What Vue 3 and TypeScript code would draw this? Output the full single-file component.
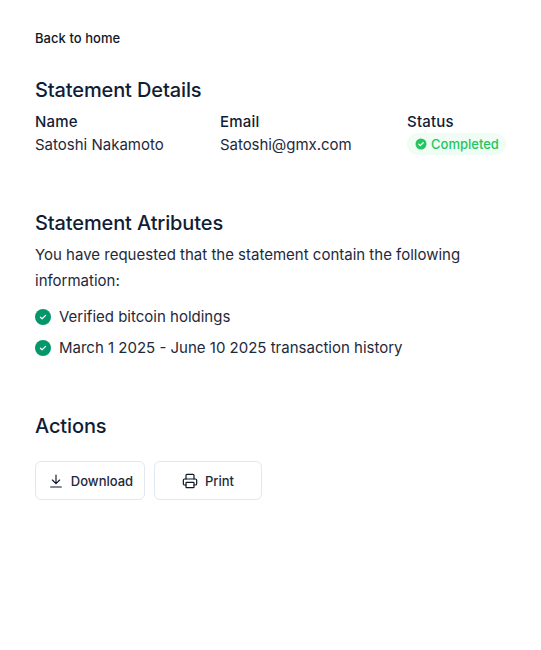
<template>
  <main class="page">
    <a class="back" href="#">Back to home</a>

    <section class="details">
      <h2>Statement Details</h2>
      <div class="fields">
        <div class="field name">
          <h3>Name</h3>
          <p>Satoshi Nakamoto</p>
        </div>
        <div class="field email">
          <h3>Email</h3>
          <p>Satoshi@gmx.com</p>
        </div>
        <div class="field">
          <h3>Status</h3>
          <span class="badge">
            <svg width="12" height="12" viewBox="0 0 12 12">
              <circle cx="6" cy="6" r="5.5" fill="#22c55e" />
              <path d="M3.8 6.100 5.300 7.600 8.200 4.700" fill="none" stroke="#fff" stroke-width="1.300" stroke-linecap="round" stroke-linejoin="round" />
            </svg>
            Completed
          </span>
        </div>
      </div>
    </section>

    <section class="attributes">
      <h2>Statement Atributes</h2>
      <p class="intro">You have requested that the statement contain the following information:</p>
      <ul>
        <li v-for="item in items" :key="item">
          <svg width="16" height="16" viewBox="0 0 16 16">
            <circle cx="8" cy="8" r="8" fill="#059669" />
            <path d="M5.400 8.200 7.100 9.800 10.600 6.400" fill="none" stroke="#fff" stroke-width="1.200" stroke-linecap="round" stroke-linejoin="round" />
          </svg>
          {{ item }}
        </li>
      </ul>
    </section>

    <section class="actions">
      <h2>Actions</h2>
      <div class="buttons">
        <button type="button" class="download">
          <svg width="16" height="16" viewBox="0 0 24 24" fill="none" stroke="#0f172a" stroke-width="1.700" stroke-linecap="round" stroke-linejoin="round">
            <path d="M12 3v13M6.500 10.500 12 16l5.500-5.500M4 21h16" />
          </svg>
          Download
        </button>
        <button type="button" class="print">
          <svg width="16" height="16" viewBox="0 0 24 24" fill="none" stroke="#0f172a" stroke-width="1.800" stroke-linecap="round" stroke-linejoin="round">
            <path d="M6 9V3.500A1.500 1.500 0 0 1 7.500 2h9A1.500 1.500 0 0 1 18 3.500V9" />
            <path d="M6 18H4a2 2 0 0 1-2-2v-5a2 2 0 0 1 2-2h16a2 2 0 0 1 2 2v5a2 2 0 0 1-2 2h-2" />
            <rect x="6" y="14" width="12" height="8" rx="1" />
          </svg>
          Print
        </button>
      </div>
    </section>
  </main>
</template>

<script setup lang="ts">
const items: string[] = [
  'Verified bitcoin holdings',
  'March 1 2025 - June 10 2025 transaction history'
]
</script>

<style>
body {
  background: #fff;
}
</style>

<style scoped>
.page {
  box-sizing: border-box;
  width: 541px;
  height: 650px;
  padding: 30px 35px 0;
  font-family: Inter, "Liberation Sans", sans-serif;
  color: #0f172a;
}

.back {
  display: block;
  font-size: 13px;
  line-height: 16px;
  font-weight: 450;
  letter-spacing: 0.05px;
  color: #0f172a;
  text-decoration: none;
}

h2 {
  margin: 0;
  font-size: 20px;
  line-height: 24px;
  font-weight: 500;
  letter-spacing: -0.12px;
  color: #111c35;
}

h3 {
  margin: 0;
  font-size: 15px;
  line-height: 20px;
  font-weight: 450;
  letter-spacing: 0.2px;
  color: #111c35;
}

p {
  margin: 0;
}

.details {
  margin-top: 32px;
}

.fields {
  display: flex;
  margin-top: 10px;
}

.field {
  flex: none;
}

.field p {
  margin-top: 2px;
  font-size: 15px;
  line-height: 22px;
  color: #1e293b;
}

.email p {
  letter-spacing: -0.05px;
}

.name {
  width: 185px;
}

.email {
  width: 187px;
}

.badge {
  box-sizing: border-box;
  display: flex;
  align-items: center;
  gap: 4px;
  width: fit-content;
  height: 22px;
  margin-top: 1px;
  padding: 0 6px 0 7px;
  border: 1px solid #ecfdf3;
  border-radius: 11px;
  background: #f0fdf4;
  font-size: 13px;
  font-weight: 450;
  color: #22c55e;
}

.attributes {
  margin-top: 55px;
}

.intro {
  margin-top: 7px;
  font-size: 15px;
  line-height: 26px;
  color: #1e293b;
}

ul {
  list-style: none;
  margin: 11px 0 0;
  padding: 0;
  display: flex;
  flex-direction: column;
  gap: 7px;
}

li {
  display: flex;
  align-items: center;
  gap: 8px;
  font-size: 15px;
  line-height: 24px;
  color: #1e293b;
}

.actions {
  margin-top: 54px;
}

.buttons {
  display: flex;
  gap: 9px;
  margin-top: 23px;
}

button {
  display: flex;
  align-items: center;
  justify-content: center;
  gap: 7px;
  height: 39px;
  padding: 0;
  background: #fff;
  border: 1px solid #e2e8f0;
  border-radius: 6px;
  font-family: inherit;
  font-size: 13px;
  font-weight: 450;
  color: #1e293b;
}

.download {
  width: 110px;
  padding-left: 1px;
}

.print {
  width: 108px;
}
</style>
